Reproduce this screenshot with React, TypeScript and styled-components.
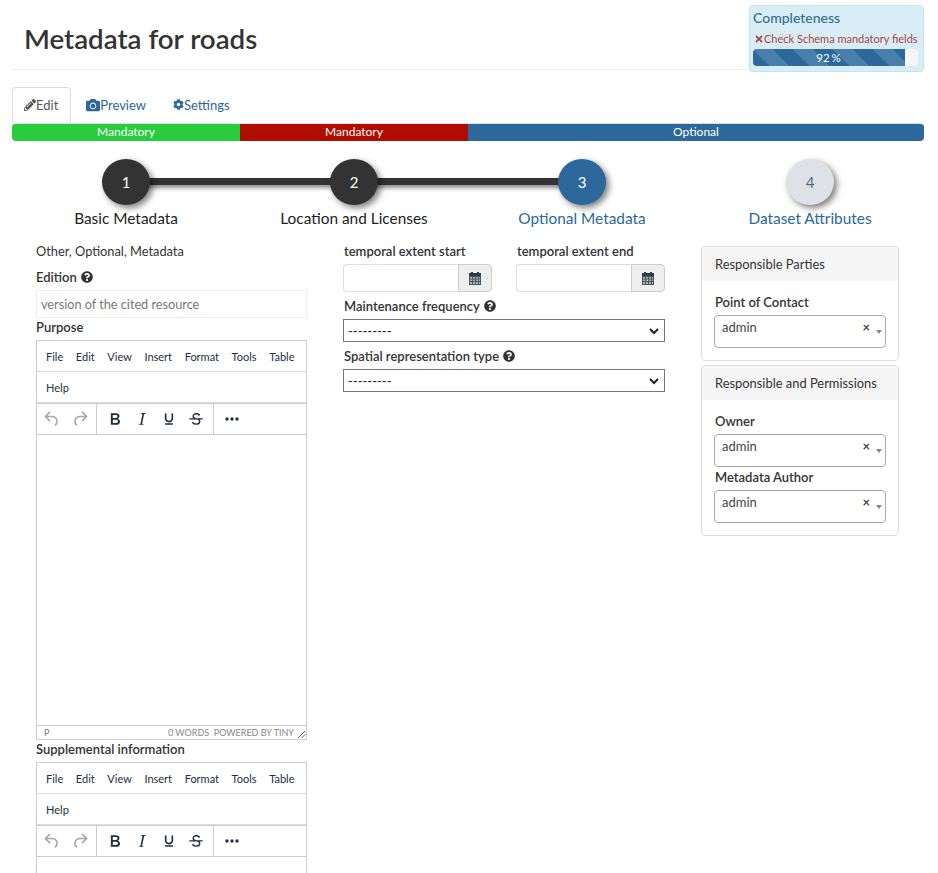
import React, { FC } from 'react';
import styled, { createGlobalStyle } from 'styled-components';
import { FaCamera, FaCog, FaPencilAlt, FaQuestionCircle, FaTimes } from 'react-icons/fa';

const GlobalStyle = createGlobalStyle`
  html, body {
    margin: 0;
    height: 873px;
    overflow: hidden;
    background: #fff;
  }
  body {
    font-family: Lato, "Open Sans", sans-serif;
    font-size: 14px;
    line-height: 20px;
    color: #333;
  }
  * {
    box-sizing: border-box;
  }
`;

const Page = styled.div`
  width: 938px;
  height: 873px;
  padding: 0 14px 0 12px;
  overflow: hidden;
`;

const Header = styled.header`
  height: 70px;
  display: flex;
  justify-content: space-between;
  align-items: flex-start;
  padding-left: 12px;
  border-bottom: 1px solid #eee;
`;

const Title = styled.h1`
  margin: 22px 0 0;
  font-size: 27.7px;
  line-height: 34px;
  font-weight: 600;
  color: #333;
`;

const Completeness = styled.div`
  width: 175px;
  height: 67px;
  margin-top: 5px;
  padding: 3px 5px 3px 3px;
  background: #d9edf7;
  border: 1px solid #bce8f1;
  border-radius: 4px;
  position: relative;
  z-index: 1;
`;

const CompletenessTitle = styled.div`
  font-size: 14px;
  line-height: 18px;
  font-weight: 500;
  color: #31708f;
`;

const CompletenessError = styled.div`
  margin: 3px 0 1px;
  font-size: 11px;
  line-height: 18px;
  color: #a94442;
  white-space: nowrap;
  padding-left: 1px;
  display: flex;
  align-items: center;

  svg {
    flex: none;
    width: 10px;
    height: 10px;
  }
`;

const Progress = styled.div`
  height: 17px;
  background: #f5f5f5;
  border-radius: 4px;
  overflow: hidden;
`;

const ProgressBar = styled.div`
  height: 100%;
  background-color: #2c689c;
  background-image: linear-gradient(
    45deg,
    rgba(255, 255, 255, 0.15) 25%,
    transparent 25%,
    transparent 50%,
    rgba(255, 255, 255, 0.15) 50%,
    rgba(255, 255, 255, 0.15) 75%,
    transparent 75%,
    transparent
  );
  background-size: 40px 40px;
`;

const ProgressLabel = styled.div`
  height: 17px;
  margin-top: -17px;
  padding-right: 14px;
  position: relative;
  text-align: center;
  font-size: 11.5px;
  line-height: 17px;
  word-spacing: -1px;
  color: #fff;
`;

const Tabs = styled.nav`
  display: flex;
  margin-top: 17px;
  height: 36px;
`;

const Tab = styled.a<{ $active?: boolean; $icon: number }>`
  display: flex;
  align-items: center;
  height: 36px;
  padding: 0 11px 2px 11px;
  margin-right: 3px;
  font-size: 13px;
  color: ${(p) => (p.$active ? '#555' : '#2c689c')};
  background: #fff;
  border: 1px solid ${(p) => (p.$active ? '#ddd' : 'transparent')};
  border-bottom: 0;
  border-radius: 4px 4px 0 0;

  &:first-child {
    padding-right: 12px;
  }

  svg {
    flex: none;
    width: ${(p) => p.$icon}px;
    height: ${(p) => p.$icon}px;
  }
`;

const Sections = styled.div`
  display: flex;
  height: 18px;
  border-radius: 4px;
  overflow: hidden;
  border-top: 1px solid #ddd;
`;

const Section = styled.div<{ $color: string; $grow: number }>`
  flex: ${(p) => p.$grow} 0 0;
  background: ${(p) => p.$color};
  color: #fff;
  text-align: center;
  font-size: 12px;
  line-height: 16px;
`;

const Steps = styled.div`
  display: grid;
  grid-template-columns: repeat(4, 1fr);
  margin-top: 18px;
`;

const Step = styled.div<{ $line?: boolean }>`
  display: flex;
  flex-direction: column;
  align-items: center;
  position: relative;

  &::after {
    content: ${(p) => (p.$line ? "''" : 'none')};
    position: absolute;
    top: 19px;
    left: 50%;
    width: 100%;
    height: 7px;
    background: #333;
    box-shadow: 1px 3px 4px rgba(0, 0, 0, 0.45);
  }
`;

const Circle = styled.div<{ $bg: string; $fg: string }>`
  width: 48px;
  height: 46px;
  border-radius: 50%;
  background: ${(p) => p.$bg};
  color: ${(p) => p.$fg};
  display: flex;
  align-items: center;
  justify-content: center;
  font-size: 15px;
  box-shadow: 3px 3px 6px rgba(0, 0, 0, 0.5);
  position: relative;
  z-index: 1;
`;

const StepLabel = styled.div<{ $color: string }>`
  margin-top: 3px;
  font-size: 15.4px;
  line-height: 20px;
  color: ${(p) => p.$color};
`;

const Columns = styled.div`
  display: flex;
  margin-top: 14px;
  padding-left: 24px;
  align-items: flex-start;
`;

const LeftCol = styled.div`
  width: 271px;
  margin-right: 36px;
  flex: none;
`;

const MiddleCol = styled.div`
  width: 322px;
  margin-right: 36px;
  flex: none;
`;

const RightCol = styled.div`
  width: 198px;
  flex: none;
  display: flex;
  flex-direction: column;
  gap: 4px;
  margin-top: 4px;
`;

const Plain = styled.div`
  font-size: 12.8px;
  line-height: 14px;
  margin-top: 2px;
  color: #333;
`;

const Label = styled.label`
  display: flex;
  align-items: center;
  gap: 4px;
  font-size: 13px;
  line-height: 18px;
  font-weight: 600;
  color: #333;

  svg {
    font-size: 12px;
  }
`;

const EditionLabel = styled(Label)`
  margin-top: 10px;
`;

const TextInput = styled.div`
  height: 28px;
  margin-top: 4px;
  padding: 0 4px;
  font-size: 12.7px;
  line-height: 26px;
  color: #777;
  border: 1px solid #eee;
`;

const EditorLabel = styled(Label)`
  margin: 0 0 4px;
`;

const Editor = styled.div<{ $height?: number }>`
  height: ${(p) => p.$height}px;
  border: 1px solid #ccc;
  display: flex;
  flex-direction: column;
`;

const MenuRow = styled.div`
  height: 31px;
  flex: none;
  display: flex;
  align-items: center;
  padding: 1px 0 0 9px;
  gap: 12.6px;
  font-size: 11px;
  color: #222f3e;
  border-bottom: 1px solid #ddd;
`;

const ToolRow = styled.div`
  height: 32px;
  flex: none;
  display: flex;
  border-top: 1px solid #ccc;
  border-bottom: 1px solid #ccc;
`;

const ToolGroup = styled.div<{ $pad: string; $gap: number; $last?: boolean }>`
  display: flex;
  align-items: center;
  padding: ${(p) => p.$pad};
  gap: ${(p) => p.$gap}px;
  border-right: ${(p) => (p.$last ? 'none' : '1px solid #ccc')};
`;

const Icon = styled.svg<{ $muted?: boolean }>`
  width: 20px;
  height: 20px;
  fill: ${(p) => (p.$muted ? '#a4a8ad' : '#222f3e')};
  flex: none;
`;

const EditArea = styled.div`
  flex: 1;
`;

const StatusBar = styled.div`
  height: 14px;
  flex: none;
  display: flex;
  align-items: center;
  padding: 0 0 0 7px;
  border-top: 1px solid #ccc;
  font-size: 9px;
  line-height: 12px;
  color: #888;
`;

const StatusPath = styled.span`
  color: #7a6aa8;
  flex: 1;
`;

const ResizeHandle = styled.svg`
  width: 9px;
  height: 9px;
  margin: 3px 0 0 3px;
  flex: none;
`;

const Dates = styled.div`
  display: grid;
  grid-template-columns: 149px 149px;
  column-gap: 24px;
`;

const DateLabel = styled(Label)`
  margin: 0 0 4px;
  padding-left: 1px;
`;

const DateField = styled.div`
  display: flex;
  height: 28px;
  width: 149px;
`;

const DateInput = styled.div`
  flex: 1;
  border: 1px solid #ddd;
  border-right: 0;
  border-radius: 4px 0 0 4px;
`;

const DateButton = styled.div`
  width: 34px;
  display: flex;
  align-items: center;
  justify-content: center;
  background: #eee;
  border: 1px solid #ccc;
  border-radius: 0 4px 4px 0;

  svg {
    width: 12px;
    height: 13px;
  }
`;

const SelectLabel = styled(Label)`
  margin: 5px 0 4px;
  padding-left: 1px;
`;

const SelectBox = styled.div`
  height: 23px;
  display: flex;
  align-items: center;
  justify-content: space-between;
  padding: 0 5px 0 4px;
  border: 1px solid #767676;
  font-size: 13px;
  color: #222;

  svg {
    width: 10px;
    height: 10px;
  }
`;

const Panel = styled.section`
  border: 1px solid #ddd;
  border-radius: 4px;
  overflow: hidden;
`;

const PanelHead = styled.div`
  height: 34px;
  padding: 0 13px;
  display: flex;
  align-items: center;
  background: #f5f5f5;
  font-size: 12.9px;
  color: #333;
`;

const PanelBody = styled.div`
  padding: 12px;
`;

const PanelLabel = styled(Label)`
  margin: 0 0 4px;
  padding-left: 1px;
`;

const PickerLabel = styled(PanelLabel)`
  margin-top: 1px;
`;

const Picker = styled.div`
  height: 33px;
  display: flex;
  padding: 0 3px 0 7px;
  border: 1px solid #aaa;
  border-radius: 4px;
  font-size: 13px;
  line-height: 23px;
  color: #444;

  b {
    flex: 1;
    font-weight: 400;
  }

  i {
    font-style: normal;
    font-weight: 700;
    font-size: 13px;
    line-height: 22px;
    color: #444;
    margin-right: 6px;
  }

  u {
    width: 0;
    height: 0;
    margin-top: 14px;
    border: 3px solid transparent;
    border-top: 4px solid #888;
  }
`;

const HelpIcon = () => <FaQuestionCircle />;

const ToolIcon: FC<{ d: string; muted?: boolean }> = ({ d, muted }) => (
  <Icon viewBox="0 0 24 24" $muted={muted}>
    <path d={d} />
  </Icon>
);

const paths = {
  undo: 'M6.4 8H12c3.7 0 6.2 2 6.8 5.1.6 2.7-.4 5.6-2.3 6.8a1 1 0 0 1-1-1.8c1.1-.7 1.8-2.7 1.4-4.6-.5-2.1-2.1-3.5-4.9-3.5H6.4l3.3 3.3a1 1 0 1 1-1.4 1.4l-5-5a1 1 0 0 1 0-1.4l5-5a1 1 0 0 1 1.4 1.4L6.4 8z',
  redo: 'M17.6 10H12c-2.8 0-4.4 1.4-4.9 3.5-.4 2 .3 3.9 1.4 4.6a1 1 0 1 1-1 1.8c-2-1.2-2.9-4.1-2.3-6.8.6-3 3-5.1 6.8-5.1h5.6l-3.3-3.3a1 1 0 1 1 1.4-1.4l5 5a1 1 0 0 1 0 1.4l-5 5a1 1 0 0 1-1.4-1.4l3.3-3.3z',
  bold: 'M7.8 19c-.3 0-.5 0-.6-.2l-.2-.5V5.7c0-.2 0-.4.2-.5l.6-.2h5c1.5 0 2.7.3 3.5 1 .7.6 1.1 1.4 1.1 2.5a3 3 0 0 1-.6 1.9c-.4.6-1 1-1.6 1.2.4.1.9.3 1.3.6s.8.7 1 1.2c.4.4.5 1 .5 1.6 0 1.3-.4 2.3-1.3 3-.8.7-2.1 1-3.8 1H7.8zm5-8.3c.6 0 1.2-.1 1.6-.5.4-.3.6-.7.6-1.3 0-1.1-.8-1.7-2.3-1.7H9.3v3.5h3.4zm.5 6c.7 0 1.3-.1 1.7-.4.4-.4.6-.9.6-1.5s-.2-1-.7-1.4c-.4-.3-1-.4-2-.4H9.4v3.8h4z',
  italic: 'M16.7 4.7l-.1.9h-.3c-.6 0-1 0-1.4.3-.3.3-.4.6-.5 1.1l-2.1 9.8v.6c0 .5.4.8 1.4.8h.2l-.2.8H8l.2-.8h.2c1.1 0 1.8-.5 2-1.5l2-9.8.1-.5c0-.6-.4-.8-1.4-.8h-.3l.2-.9h5.8z',
  underline: 'M16 5c.6 0 1 .4 1 1v5.5a4 4 0 0 1-.4 1.8l-1 1.4a5.3 5.3 0 0 1-5.5 1 5 5 0 0 1-1.6-1c-.5-.4-.8-.9-1.1-1.4a4 4 0 0 1-.4-1.8V6c0-.6.4-1 1-1s1 .4 1 1v5.5c0 .3 0 .6.2 1l.6.7a3.3 3.3 0 0 0 2.2.8 3.4 3.4 0 0 0 2.2-.8c.3-.2.4-.5.6-.8l.2-.9V6c0-.6.4-1 1-1zM8 17h8c.6 0 1 .4 1 1s-.4 1-1 1H8a1 1 0 0 1 0-2z',
  strike: 'M15.6 8.5c-.5-.7-1-1.1-1.3-1.3-.6-.4-1.3-.6-2-.6-2.7 0-2.8 1.7-2.8 2.1 0 1.6 1.8 2 3.2 2.3 4.4.9 4.6 2.8 4.6 3.9 0 1.4-.7 4.1-5 4.1A6.2 6.2 0 0 1 7 16.4l1.5-1.1c.4.6 1.6 2 3.7 2 1.6 0 2.5-.4 3-1 .3-.4.4-.9.4-1.5 0-1.6-2-2-3.7-2.4-2.5-.5-4.1-1.3-4.1-3.8 0-2.2 2-3.8 4.3-3.8 2.3 0 3.5.8 4 1.3.4.4.7.7 1 1.2l-1.5.9zM4 11h16v1.5H4z',
  more: 'M6 10a2 2 0 0 0-2 2c0 1.1.9 2 2 2a2 2 0 0 0 2-2 2 2 0 0 0-2-2zm12 0a2 2 0 0 0-2 2c0 1.1.9 2 2 2a2 2 0 0 0 2-2 2 2 0 0 0-2-2zm-6 0a2 2 0 0 0-2 2c0 1.1.9 2 2 2a2 2 0 0 0 2-2 2 2 0 0 0-2-2z',
};

const Chevron = () => (
  <svg viewBox="0 0 10 10">
    <path d="M1 3l4 4 4-4" fill="none" stroke="#222" strokeWidth="2" />
  </svg>
);

// old font-awesome calendar: solid top bar with a tight grid below
const CalendarIcon = () => (
  <svg viewBox="0 0 12 13">
    <path d="M2 0h2v2H2zM8 0h2v2H8z" fill="#2f3b48" />
    <path d="M0 1h12v3H0z" fill="#2f3b48" />
    <path d="M0 4h12v9H0z" fill="#46566a" />
    <path
      d="M1 5h2v1.500H1zM4 5h2v1.500H4zM7 5h2v1.500H7zM10 5h1v1.500h-1zM1 7.500h2V9H1zM4 7.500h2V9H4zM7 7.500h2V9H7zM10 7.500h1V9h-1zM1 10h2v2H1zM4 10h2v2H4zM7 10h2v2H7zM10 10h1v2h-1z"
      fill="#b9b4a8"
    />
  </svg>
);

const EditorChrome = () => (
  <>
    <MenuRow>
      {['File', 'Edit', 'View', 'Insert', 'Format', 'Tools', 'Table'].map((m) => (
        <span key={m}>{m}</span>
      ))}
    </MenuRow>
    <MenuRow>
      <span>Help</span>
    </MenuRow>
    <ToolRow>
      <ToolGroup $pad="0 6px 0 5px" $gap={8}>
        <ToolIcon d={paths.undo} muted />
        <ToolIcon d={paths.redo} muted />
      </ToolGroup>
      <ToolGroup $pad="0 7px 0 8px" $gap={7}>
        <ToolIcon d={paths.bold} />
        <ToolIcon d={paths.italic} />
        <ToolIcon d={paths.underline} />
        <ToolIcon d={paths.strike} />
      </ToolGroup>
      <ToolGroup $pad="0 0 0 8px" $gap={0} $last>
        <ToolIcon d={paths.more} />
      </ToolGroup>
    </ToolRow>
  </>
);

const steps = [
  { n: 1, label: 'Basic Metadata', bg: '#333', fg: '#fff', color: '#222', line: true },
  { n: 2, label: 'Location and Licenses', bg: '#333', fg: '#fff', color: '#222', line: true },
  { n: 3, label: 'Optional Metadata', bg: '#2c689c', fg: '#fff', color: '#2c689c' },
  { n: 4, label: 'Dataset Attributes', bg: '#dee2e6', fg: '#4a6d92', color: '#2c689c' },
];

const App: FC = () => (
  <Page>
    <GlobalStyle />
    <Header>
      <Title>Metadata for roads</Title>
      <Completeness>
        <CompletenessTitle>Completeness</CompletenessTitle>
        <CompletenessError>
          <FaTimes />
          Check Schema mandatory fields
        </CompletenessError>
        <Progress>
          <ProgressBar style={{ width: '92%' }} />
          <ProgressLabel>92 %</ProgressLabel>
        </Progress>
      </Completeness>
    </Header>

    <Tabs>
      <Tab $active $icon={12}>
        <FaPencilAlt />
        Edit
      </Tab>
      <Tab $icon={14}>
        <FaCamera />
        Preview
      </Tab>
      <Tab $icon={11}>
        <FaCog />
        Settings
      </Tab>
    </Tabs>

    <Sections>
      <Section $color="#28cc3c" $grow={228}>Mandatory</Section>
      <Section $color="#b10c00" $grow={228}>Mandatory</Section>
      <Section $color="#2c689c" $grow={456}>Optional</Section>
    </Sections>

    <Steps>
      {steps.map((s) => (
        <Step key={s.n} $line={s.line}>
          <Circle $bg={s.bg} $fg={s.fg}>{s.n}</Circle>
          <StepLabel $color={s.color}>{s.label}</StepLabel>
        </Step>
      ))}
    </Steps>

    <Columns>
      <LeftCol>
        <Plain>Other, Optional, Metadata</Plain>
        <EditionLabel>
          Edition <HelpIcon />
        </EditionLabel>
        <TextInput>version of the cited resource</TextInput>
        <EditorLabel>Purpose</EditorLabel>
        <Editor $height={400}>
          <EditorChrome />
          <EditArea />
          <StatusBar>
            <StatusPath>P</StatusPath>
            0 WORDS &nbsp;POWERED BY TINY
            <ResizeHandle viewBox="0 0 9 9">
              <path d="M8 1L1 8M8 4.500L4.500 8" stroke="#555" strokeWidth="1" fill="none" />
            </ResizeHandle>
          </StatusBar>
        </Editor>
        <EditorLabel>Supplemental information</EditorLabel>
        <Editor $height={400}>
          <EditorChrome />
        </Editor>
      </LeftCol>

      <MiddleCol>
        <Dates>
          <div>
            <DateLabel>temporal extent start</DateLabel>
            <DateField>
              <DateInput />
              <DateButton><CalendarIcon /></DateButton>
            </DateField>
          </div>
          <div>
            <DateLabel>temporal extent end</DateLabel>
            <DateField>
              <DateInput />
              <DateButton><CalendarIcon /></DateButton>
            </DateField>
          </div>
        </Dates>
        <SelectLabel>
          Maintenance frequency <HelpIcon />
        </SelectLabel>
        <SelectBox>
          ---------
          <Chevron />
        </SelectBox>
        <SelectLabel>
          Spatial representation type <HelpIcon />
        </SelectLabel>
        <SelectBox>
          ---------
          <Chevron />
        </SelectBox>
      </MiddleCol>

      <RightCol>
        <Panel>
          <PanelHead>Responsible Parties</PanelHead>
          <PanelBody>
            <PanelLabel>Point of Contact</PanelLabel>
            <Picker>
              <b>admin</b>
              <i>×</i>
              <u />
            </Picker>
          </PanelBody>
        </Panel>
        <Panel>
          <PanelHead>Responsible and Permissions</PanelHead>
          <PanelBody>
            <PanelLabel>Owner</PanelLabel>
            <Picker>
              <b>admin</b>
              <i>×</i>
              <u />
            </Picker>
            <PickerLabel>Metadata Author</PickerLabel>
            <Picker>
              <b>admin</b>
              <i>×</i>
              <u />
            </Picker>
          </PanelBody>
        </Panel>
      </RightCol>
    </Columns>
  </Page>
);

export default App;
